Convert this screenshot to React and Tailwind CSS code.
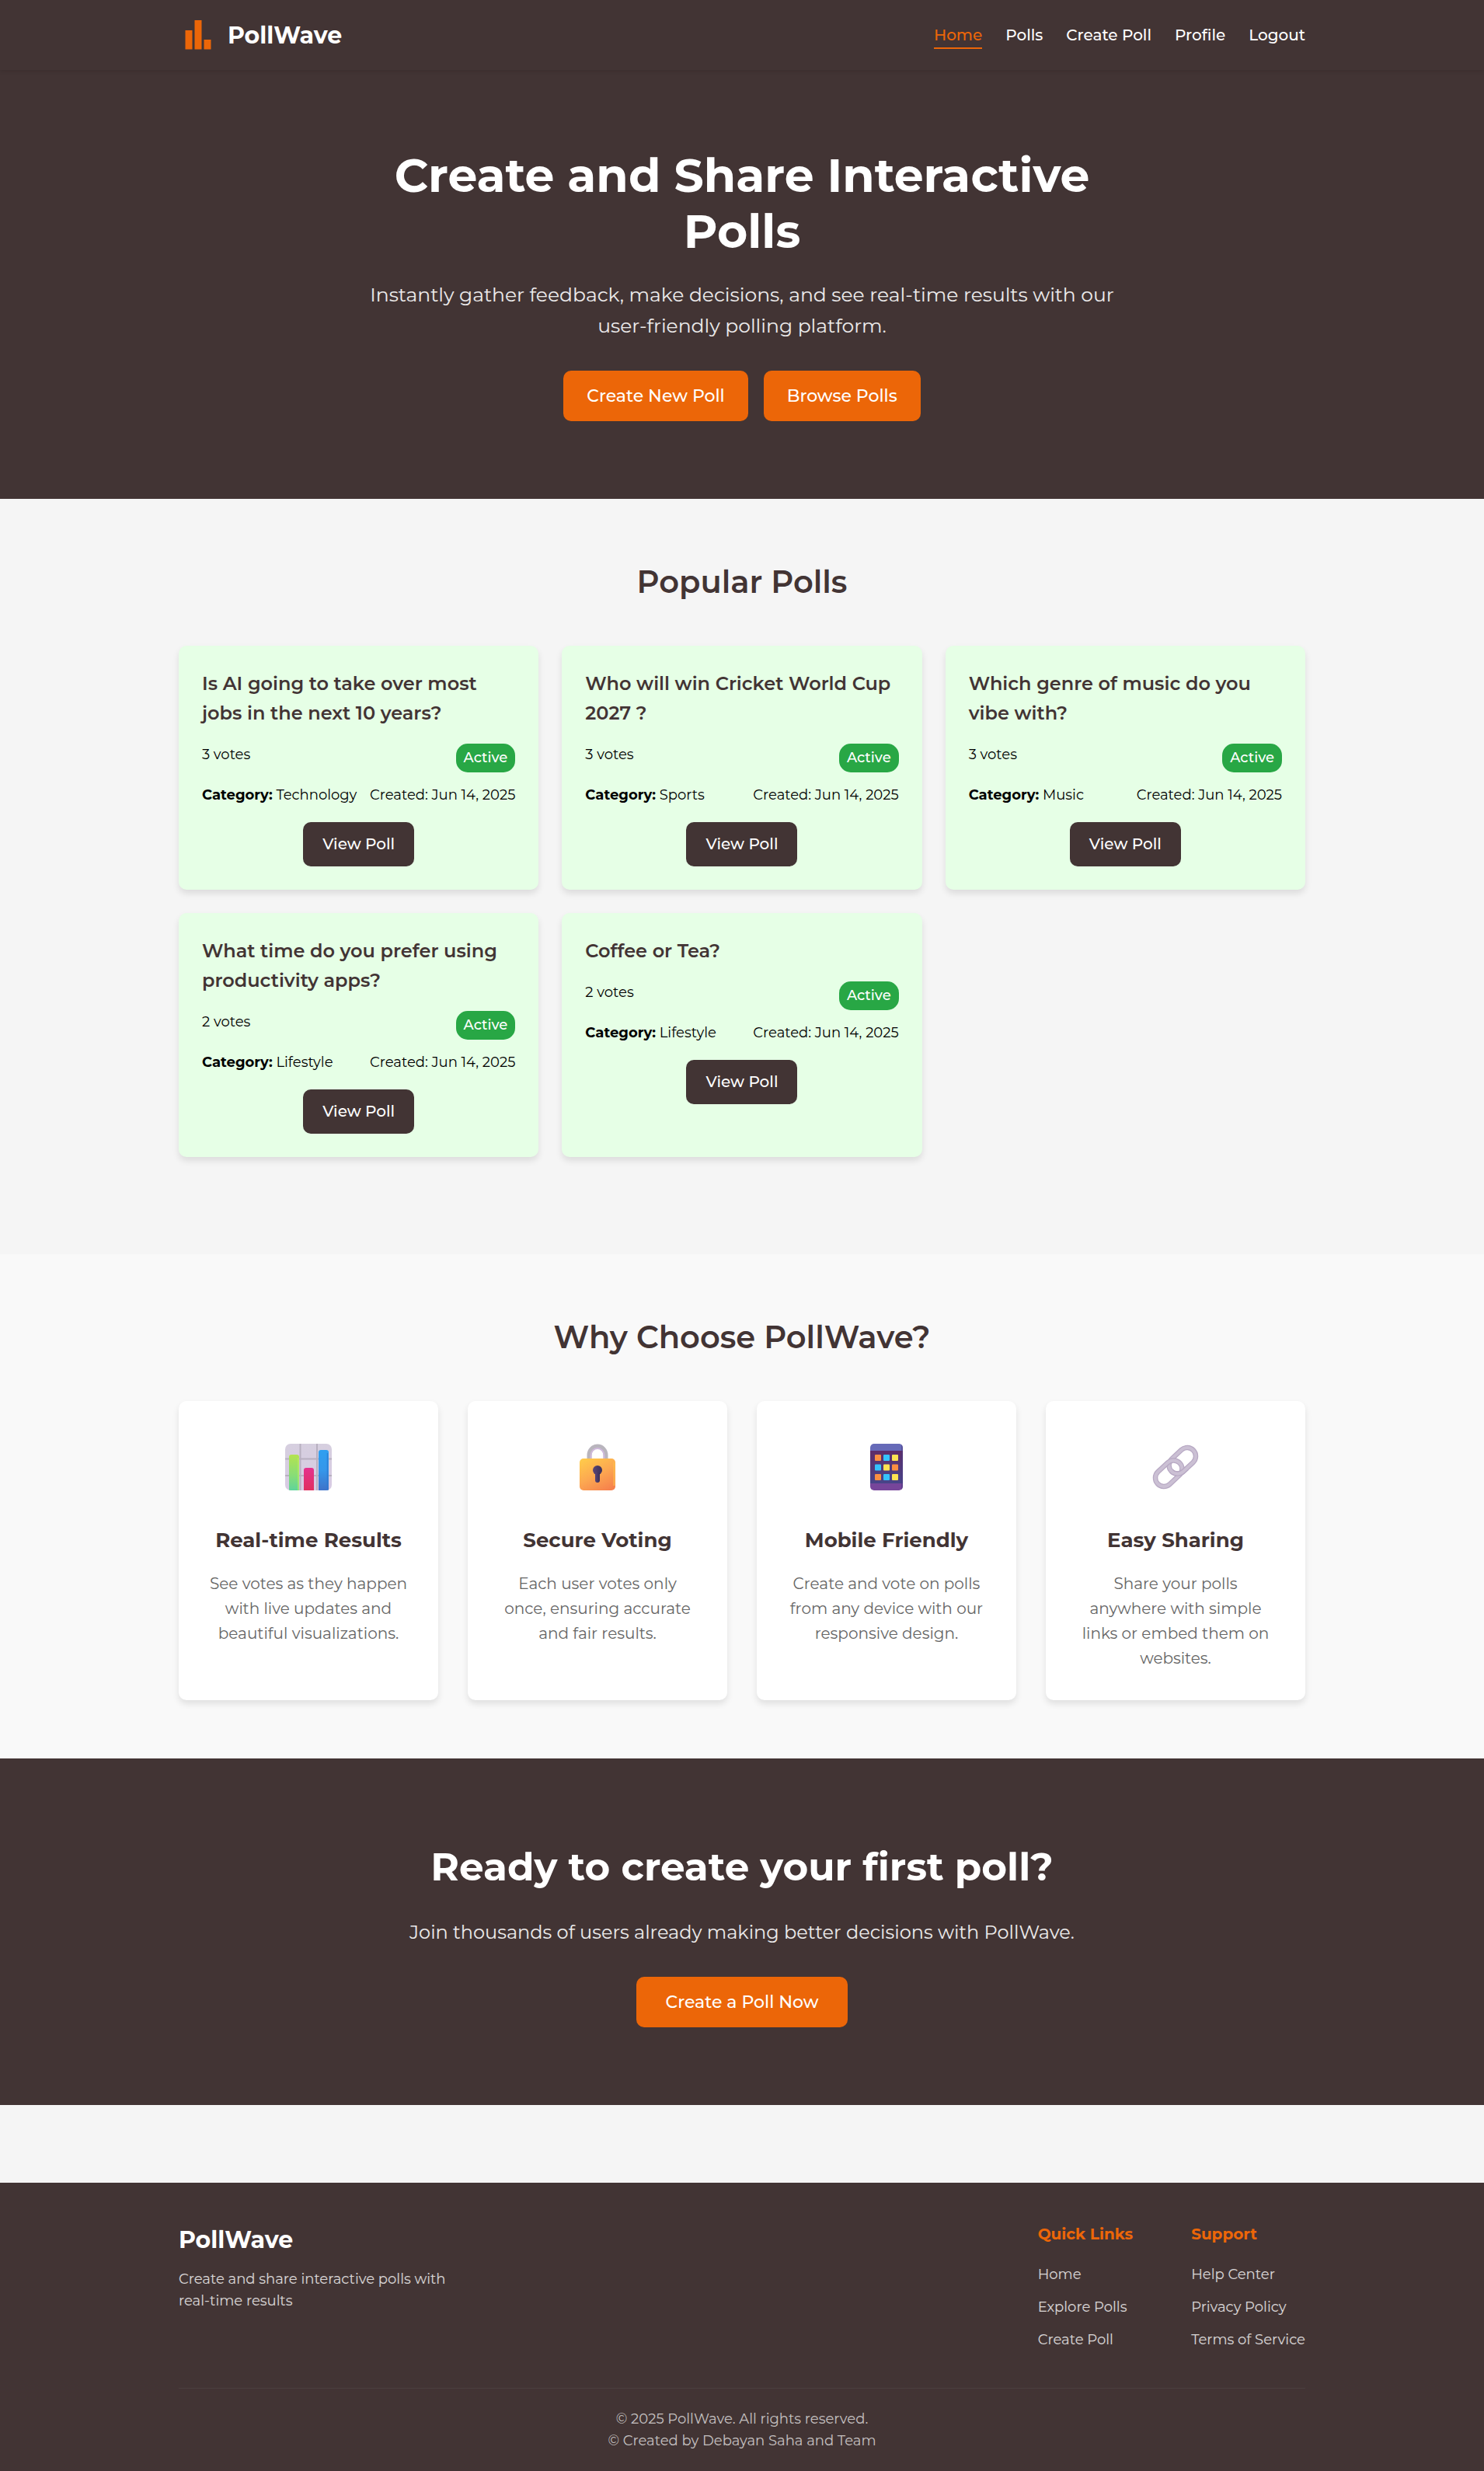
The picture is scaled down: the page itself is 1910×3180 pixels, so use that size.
import React from "react";

const polls = [
  { title: "Is AI going to take over most jobs in the next 10 years?", votes: 3, category: "Technology" },
  { title: "Who will win Cricket World Cup 2027 ?", votes: 3, category: "Sports" },
  { title: "Which genre of music do you vibe with?", votes: 3, category: "Music" },
  { title: "What time do you prefer using productivity apps?", votes: 2, category: "Lifestyle" },
  { title: "Coffee or Tea?", votes: 2, category: "Lifestyle" },
];

function LogoIcon() {
  return (
    <svg viewBox="0 0 50 50" className="h-[50px] w-[50px]" fill="#ec6608" aria-hidden="true">
      <rect x="8.5" y="19" width="9" height="24.5" />
      <rect x="20.5" y="6" width="9" height="37.5" />
      <rect x="32.5" y="31" width="9" height="12.5" />
    </svg>
  );
}

function ChartIcon() {
  return (
    <svg viewBox="0 0 60 60" className="h-[60px] w-[60px]" aria-hidden="true">
      <defs>
        <linearGradient id="chart-green" x1="0" y1="0" x2="0" y2="1">
          <stop offset="0" stopColor="#b4e34f" />
          <stop offset="0.6" stopColor="#86dd78" />
          <stop offset="1" stopColor="#5fd49b" />
        </linearGradient>
        <linearGradient id="chart-red" x1="0" y1="0" x2="0" y2="1">
          <stop offset="0" stopColor="#e5318e" />
          <stop offset="1" stopColor="#e0305f" />
        </linearGradient>
        <linearGradient id="chart-blue" x1="0" y1="0" x2="0" y2="1">
          <stop offset="0" stopColor="#2f9ff0" />
          <stop offset="0.5" stopColor="#3597ea" />
          <stop offset="1" stopColor="#3f73c9" />
        </linearGradient>
        <linearGradient id="chart-back" x1="0" y1="0" x2="0" y2="1">
          <stop offset="0" stopColor="#d6cfdf" />
          <stop offset="1" stopColor="#d8cbe4" />
        </linearGradient>
        <clipPath id="chart-clip">
          <rect width="60" height="60" rx="7" />
        </clipPath>
      </defs>
      <g clipPath="url(#chart-clip)">
        <rect width="60" height="60" fill="url(#chart-back)" />
        <path d="M19.5 0V60M41 0V60M0 19.500H60M0 41H60" stroke="#b8b0c0" strokeWidth="2" />
        <path d="M5 60V17q0-3 3-3h7q3 0 3 3V60z" fill="url(#chart-green)" />
        <path d="M17 18V60" stroke="#c2ef62" strokeWidth="1.500" opacity="0.7" />
        <path d="M24 60V34q0-3 3-3h7q3 0 3 3V60z" fill="url(#chart-red)" />
        <path d="M43 60V11q0-3 3-3h7q3 0 3 3V60z" fill="url(#chart-blue)" />
        <path d="M54.500 12V60" stroke="#2c78d0" strokeWidth="1.500" opacity="0.7" />
      </g>
    </svg>
  );
}

function LockIcon() {
  return (
    <svg viewBox="0 0 60 60" className="h-[60px] w-[60px]" aria-hidden="true">
      <defs>
        <linearGradient id="lock-body" x1="0.2" y1="0" x2="0.8" y2="1">
          <stop offset="0" stopColor="#ffc84b" />
          <stop offset="0.5" stopColor="#fca851" />
          <stop offset="1" stopColor="#f6814c" />
        </linearGradient>
        <linearGradient id="lock-key" x1="0" y1="0" x2="1" y2="0">
          <stop offset="0" stopColor="#594576" />
          <stop offset="1" stopColor="#3a3057" />
        </linearGradient>
      </defs>
      <path d="M19.500 22V14.500a10.500 11 0 0 1 21 0V22" fill="none" stroke="#b9b5bd" strokeWidth="6" />
      <path d="M21.500 20V15a8.500 9 0 0 1 17 0V20" fill="none" stroke="#cfb9dc" strokeWidth="2" />
      <rect x="7" y="19" width="46" height="41" rx="5" fill="url(#lock-body)" />
      <path d="M51.500 24V54" stroke="#ffc34a" strokeWidth="2" opacity="0.7" />
      <circle cx="30" cy="34" r="6" fill="url(#lock-key)" />
      <rect x="27" y="36" width="6" height="14" rx="3" fill="url(#lock-key)" />
    </svg>
  );
}

function PhoneIcon() {
  const keys = [
    ["#fb8f42", "#35c3fd", "#fee352"],
    ["#35c3fd", "#fee352", "#fb8f42"],
    ["#fb8f42", "#35c3fd", "#fee352"],
  ];
  return (
    <svg viewBox="0 0 60 60" className="h-[60px] w-[60px]" aria-hidden="true">
      <defs>
        <linearGradient id="phone-screen" x1="0" y1="0" x2="0" y2="1">
          <stop offset="0" stopColor="#5e2c68" />
          <stop offset="1" stopColor="#46458a" />
        </linearGradient>
        <clipPath id="phone-clip">
          <rect x="9" width="42" height="60" rx="5" />
        </clipPath>
      </defs>
      <g clipPath="url(#phone-clip)">
        <rect x="9" width="42" height="10" fill="#666ab8" />
        <rect x="9" y="9" width="42" height="43" fill="url(#phone-screen)" />
        <rect x="9" y="51" width="42" height="9" fill="#76459a" />
        <path d="M50 0V60" stroke="#4b3a80" strokeWidth="2" opacity="0.5" />
      </g>
      {keys.map((row, r) =>
        row.map((color, c) => (
          <rect key={`${r}-${c}`} x={15 + c * 11} y={14 + r * 12.5} width="8" height="8" rx="1" fill={color} />
        ))
      )}
    </svg>
  );
}

function LinkIcon() {
  return (
    <svg viewBox="0 0 60 60" className="h-[60px] w-[60px]" fill="none" aria-hidden="true">
      <g transform="rotate(-43 30 30)">
        <rect x="22.500" y="19" width="39" height="22" rx="11" stroke="#b7a8c3" strokeWidth="6.500" />
        <rect x="22.500" y="19" width="39" height="22" rx="11" stroke="#cbc0d4" strokeWidth="4" />
        <rect x="-1.500" y="19" width="39" height="22" rx="11" stroke="#b7a8c3" strokeWidth="6.500" />
        <rect x="-1.500" y="19" width="39" height="22" rx="11" stroke="#cbc0d4" strokeWidth="4" />
        <path d="M22.500 30a11 11 0 0 0 11 11h6" stroke="#b7a8c3" strokeWidth="6.500" />
        <path d="M22.500 29a11 11 0 0 0 11 12h7" stroke="#cbc0d4" strokeWidth="4" />
      </g>
    </svg>
  );
}

const features = [
  { icon: <ChartIcon />, title: "Real-time Results", text: "See votes as they happen with live updates and beautiful visualizations." },
  { icon: <LockIcon />, title: "Secure Voting", text: "Each user votes only once, ensuring accurate and fair results." },
  { icon: <PhoneIcon />, title: "Mobile Friendly", text: "Create and vote on polls from any device with our responsive design." },
  { icon: <LinkIcon />, title: "Easy Sharing", text: "Share your polls anywhere with simple links or embed them on websites." },
];

const navLinks = ["Home", "Polls", "Create Poll", "Profile", "Logout"];

const footerColumns = [
  { title: "Quick Links", links: ["Home", "Explore Polls", "Create Poll"] },
  { title: "Support", links: ["Help Center", "Privacy Policy", "Terms of Service"] },
];

function ActionButton({ children, wide }) {
  return (
    <button
      type="button"
      className={`h-[65px] rounded-[10px] bg-[#ec6608] text-[22px] font-medium text-white ${wide ? "px-[38px]" : "px-[30px]"}`}
    >
      {children}
    </button>
  );
}

function PollCard({ poll }) {
  return (
    <article className="rounded-[10px] bg-[#e6ffe6] p-[30px] text-[18px] leading-[29px] text-black shadow-[0_5px_8px_rgba(0,0,0,0.1)]">
      <h3 className="mb-5 text-[24px] leading-[38px] font-semibold text-[#423434]">{poll.title}</h3>
      <div className="mb-[15px] flex items-start justify-between">
        <span>{poll.votes} votes</span>
        <span className="rounded-[15px] bg-[#28a745] px-[10px] py-1 font-medium text-white">Active</span>
      </div>
      <div className="mb-5 flex justify-between whitespace-nowrap">
        <span>
          <strong>Category:</strong> {poll.category}
        </span>
        <span>Created: Jun 14, 2025</span>
      </div>
      <div className="flex justify-center">
        <button type="button" className="h-[57px] rounded-[10px] bg-[#423434] px-[25px] text-[20px] font-medium text-white">
          View Poll
        </button>
      </div>
    </article>
  );
}

export default function App() {
  return (
    <div className="min-h-screen bg-[#f5f5f5] font-['Montserrat','Inter',sans-serif]">
      <header className="relative bg-[#423434] shadow-[0_2px_5px_rgba(0,0,0,0.1)]">
        <div className="mx-auto flex h-[90px] max-w-[1450px] items-center justify-between">
          <a href="#home" className="flex items-center gap-[13px] text-[30px] font-bold text-white">
            <LogoIcon />
            PollWave
          </a>
          <nav className="flex gap-[30px] pt-[2px] text-[20px] leading-[32px] font-medium text-white">
            {navLinks.map((label, i) => (
              <a
                key={label}
                href="#nav"
                className={i === 0 ? "border-b-2 border-[#ec6608] text-[#ec6608]" : "border-b-2 border-transparent"}
              >
                {label}
              </a>
            ))}
          </nav>
        </div>
      </header>

      <main>
        <section className="bg-[#423434] py-[100px] text-center text-white">
          <div className="mx-auto max-w-[1000px]">
            <h1 className="mb-[25px] text-[60px] leading-[72px] font-bold">Create and Share Interactive Polls</h1>
            <p className="mb-[38px] text-[25px] leading-[40px] text-white/90">
              Instantly gather feedback, make decisions, and see real-time results with our user-friendly polling platform.
            </p>
            <div className="flex justify-center gap-5">
              <ActionButton>Create New Poll</ActionButton>
              <ActionButton>Browse Polls</ActionButton>
            </div>
          </div>
        </section>

        <section className="pt-[75px] pb-[125px]">
          <div className="mx-auto max-w-[1450px]">
            <h2 className="mb-[50px] text-center text-[40px] leading-[64px] font-semibold text-[#423434]">Popular Polls</h2>
            <div className="grid grid-cols-3 gap-[30px]">
              {polls.map((poll) => (
                <PollCard key={poll.title} poll={poll} />
              ))}
            </div>
          </div>
        </section>

        <section className="bg-[#f9f9f9] py-[75px]">
          <div className="mx-auto max-w-[1450px]">
            <h2 className="mb-[50px] text-center text-[40px] leading-[64px] font-semibold text-[#423434]">Why Choose PollWave?</h2>
            <div className="grid grid-cols-4 gap-[38px]">
              {features.map((feature) => (
                <article key={feature.title} className="rounded-[10px] bg-white p-[38px] text-center shadow-[0_5px_8px_rgba(0,0,0,0.1)]">
                  <div className="mt-[17px] mb-[43px] flex justify-center">{feature.icon}</div>
                  <h3 className="mb-[19px] text-[26px] leading-[42px] font-bold whitespace-nowrap text-[#423434]">{feature.title}</h3>
                  <p className="text-[20px] leading-[32px] text-[#666]">{feature.text}</p>
                </article>
              ))}
            </div>
          </div>
        </section>

        <section className="mb-[100px] bg-[#423434] py-[100px] text-center text-white">
          <h2 className="mb-[25px] text-[50px] leading-[80px] font-bold">Ready to create your first poll?</h2>
          <p className="mb-[38px] text-[24px] leading-[38px] text-white/90">
            Join thousands of users already making better decisions with PollWave.
          </p>
          <ActionButton wide>Create a Poll Now</ActionButton>
        </section>
      </main>

      <footer className="bg-[#423434] pt-[50px] pb-[25px] text-[18px] leading-[28px] text-white">
        <div className="mx-auto max-w-[1450px]">
          <div className="flex justify-between pb-[48px]">
            <div className="w-[375px]">
              <div className="mb-[12px] text-[30px] leading-[48px] font-bold">PollWave</div>
              <p className="text-white/80">
                Create and share interactive polls with
                <br />
                real-time results
              </p>
            </div>
            <div className="flex gap-[75px]">
              {footerColumns.map((column) => (
                <div key={column.title}>
                  <h3 className="mb-[22px] text-[20px] leading-[32px] font-bold text-[#ec6608]">{column.title}</h3>
                  <ul className="flex flex-col gap-[14px] text-white/80">
                    {column.links.map((label) => (
                      <li key={label}>
                        <a href="#footer">{label}</a>
                      </li>
                    ))}
                  </ul>
                </div>
              ))}
            </div>
          </div>
          <div className="border-t border-white/5 pt-[25px] text-center text-white/70">
            <p>© 2025 PollWave. All rights reserved.</p>
            <p>© Created by Debayan Saha and Team</p>
          </div>
        </div>
      </footer>
    </div>
  );
}
